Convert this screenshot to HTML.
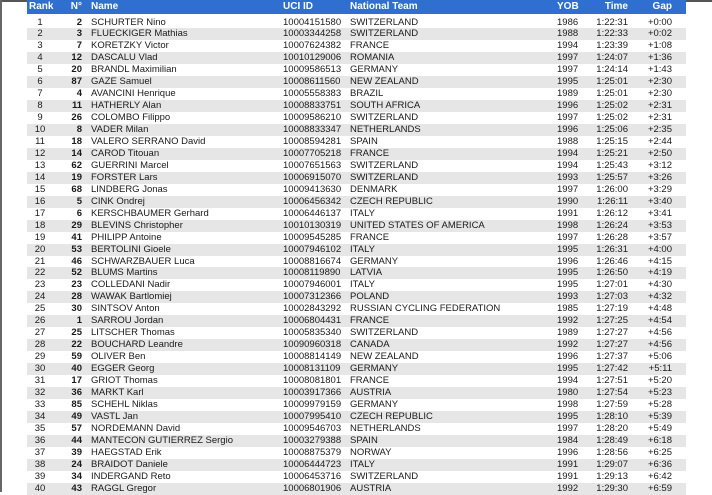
<!DOCTYPE html>
<html><head><meta charset="utf-8"><style>
body{margin:0;width:712px;height:492px;overflow:hidden;background:#fff;font-family:"Liberation Sans",Arial,sans-serif;font-size:9.5px;color:#1a1a1a;position:relative}
.topl{position:absolute;left:0;top:0;width:712px;height:2px;background:#555}
.leftl{position:absolute;left:0;top:0;width:2px;height:492px;background:#666}
.hdr{position:absolute;left:27px;top:0;width:659px;height:14px;background:#2f6fd0;color:#fff;font-weight:bold;font-size:10px}
.r{position:absolute;left:27px;width:659px;height:12px;line-height:12px}
.r:nth-child(even){background:#e6e6e6}
.r span,.hdr span{position:absolute;white-space:nowrap;top:0}
.hdr span{line-height:14px}
.a{left:0;width:26px;text-align:center}
.b{right:604px;font-weight:bold;text-align:right}
.c{left:64px}
.d{left:256px}
.e{left:323px}
.f{left:530px}
.g{right:58px}
.h{right:14px}
</style></head><body>
<div class="topl"></div><div class="leftl"></div>
<div class="hdr"><span style="left:2px">Rank</span><span class="b">N°</span><span class="c">Name</span><span class="d">UCI ID</span><span class="e">National Team</span><span class="f">YOB</span><span class="g">Time</span><span class="h">Gap</span></div>
<div id="t" style="position:absolute;left:0;top:16.5px">
<div class="r" style="top:0px"><span class="a">1</span><span class="b">2</span><span class="c">SCHURTER Nino</span><span class="d">10004151580</span><span class="e">SWITZERLAND</span><span class="f">1986</span><span class="g">1:22:31</span><span class="h">+0:00</span></div>
<div class="r" style="top:11.95px"><span class="a">2</span><span class="b">3</span><span class="c">FLUECKIGER Mathias</span><span class="d">10003344258</span><span class="e">SWITZERLAND</span><span class="f">1988</span><span class="g">1:22:33</span><span class="h">+0:02</span></div>
<div class="r" style="top:23.9px"><span class="a">3</span><span class="b">7</span><span class="c">KORETZKY Victor</span><span class="d">10007624382</span><span class="e">FRANCE</span><span class="f">1994</span><span class="g">1:23:39</span><span class="h">+1:08</span></div>
<div class="r" style="top:35.85px"><span class="a">4</span><span class="b">12</span><span class="c">DASCALU Vlad</span><span class="d">10010129006</span><span class="e">ROMANIA</span><span class="f">1997</span><span class="g">1:24:07</span><span class="h">+1:36</span></div>
<div class="r" style="top:47.8px"><span class="a">5</span><span class="b">20</span><span class="c">BRANDL Maximilian</span><span class="d">10009586513</span><span class="e">GERMANY</span><span class="f">1997</span><span class="g">1:24:14</span><span class="h">+1:43</span></div>
<div class="r" style="top:59.75px"><span class="a">6</span><span class="b">87</span><span class="c">GAZE Samuel</span><span class="d">10008611560</span><span class="e">NEW ZEALAND</span><span class="f">1995</span><span class="g">1:25:01</span><span class="h">+2:30</span></div>
<div class="r" style="top:71.7px"><span class="a">7</span><span class="b">4</span><span class="c">AVANCINI Henrique</span><span class="d">10005558383</span><span class="e">BRAZIL</span><span class="f">1989</span><span class="g">1:25:01</span><span class="h">+2:30</span></div>
<div class="r" style="top:83.65px"><span class="a">8</span><span class="b">11</span><span class="c">HATHERLY Alan</span><span class="d">10008833751</span><span class="e">SOUTH AFRICA</span><span class="f">1996</span><span class="g">1:25:02</span><span class="h">+2:31</span></div>
<div class="r" style="top:95.6px"><span class="a">9</span><span class="b">26</span><span class="c">COLOMBO Filippo</span><span class="d">10009586210</span><span class="e">SWITZERLAND</span><span class="f">1997</span><span class="g">1:25:02</span><span class="h">+2:31</span></div>
<div class="r" style="top:107.55px"><span class="a">10</span><span class="b">8</span><span class="c">VADER Milan</span><span class="d">10008833347</span><span class="e">NETHERLANDS</span><span class="f">1996</span><span class="g">1:25:06</span><span class="h">+2:35</span></div>
<div class="r" style="top:119.5px"><span class="a">11</span><span class="b">18</span><span class="c">VALERO SERRANO David</span><span class="d">10008594281</span><span class="e">SPAIN</span><span class="f">1988</span><span class="g">1:25:15</span><span class="h">+2:44</span></div>
<div class="r" style="top:131.45px"><span class="a">12</span><span class="b">14</span><span class="c">CAROD Titouan</span><span class="d">10007705218</span><span class="e">FRANCE</span><span class="f">1994</span><span class="g">1:25:21</span><span class="h">+2:50</span></div>
<div class="r" style="top:143.4px"><span class="a">13</span><span class="b">62</span><span class="c">GUERRINI Marcel</span><span class="d">10007651563</span><span class="e">SWITZERLAND</span><span class="f">1994</span><span class="g">1:25:43</span><span class="h">+3:12</span></div>
<div class="r" style="top:155.35px"><span class="a">14</span><span class="b">19</span><span class="c">FORSTER Lars</span><span class="d">10006915070</span><span class="e">SWITZERLAND</span><span class="f">1993</span><span class="g">1:25:57</span><span class="h">+3:26</span></div>
<div class="r" style="top:167.3px"><span class="a">15</span><span class="b">68</span><span class="c">LINDBERG Jonas</span><span class="d">10009413630</span><span class="e">DENMARK</span><span class="f">1997</span><span class="g">1:26:00</span><span class="h">+3:29</span></div>
<div class="r" style="top:179.25px"><span class="a">16</span><span class="b">5</span><span class="c">CINK Ondrej</span><span class="d">10006456342</span><span class="e">CZECH REPUBLIC</span><span class="f">1990</span><span class="g">1:26:11</span><span class="h">+3:40</span></div>
<div class="r" style="top:191.2px"><span class="a">17</span><span class="b">6</span><span class="c">KERSCHBAUMER Gerhard</span><span class="d">10006446137</span><span class="e">ITALY</span><span class="f">1991</span><span class="g">1:26:12</span><span class="h">+3:41</span></div>
<div class="r" style="top:203.15px"><span class="a">18</span><span class="b">29</span><span class="c">BLEVINS Christopher</span><span class="d">10010130319</span><span class="e">UNITED STATES OF AMERICA</span><span class="f">1998</span><span class="g">1:26:24</span><span class="h">+3:53</span></div>
<div class="r" style="top:215.1px"><span class="a">19</span><span class="b">41</span><span class="c">PHILIPP Antoine</span><span class="d">10009545285</span><span class="e">FRANCE</span><span class="f">1997</span><span class="g">1:26:28</span><span class="h">+3:57</span></div>
<div class="r" style="top:227.05px"><span class="a">20</span><span class="b">53</span><span class="c">BERTOLINI Gioele</span><span class="d">10007946102</span><span class="e">ITALY</span><span class="f">1995</span><span class="g">1:26:31</span><span class="h">+4:00</span></div>
<div class="r" style="top:239px"><span class="a">21</span><span class="b">46</span><span class="c">SCHWARZBAUER Luca</span><span class="d">10008816674</span><span class="e">GERMANY</span><span class="f">1996</span><span class="g">1:26:46</span><span class="h">+4:15</span></div>
<div class="r" style="top:250.95px"><span class="a">22</span><span class="b">52</span><span class="c">BLUMS Martins</span><span class="d">10008119890</span><span class="e">LATVIA</span><span class="f">1995</span><span class="g">1:26:50</span><span class="h">+4:19</span></div>
<div class="r" style="top:262.9px"><span class="a">23</span><span class="b">23</span><span class="c">COLLEDANI Nadir</span><span class="d">10007946001</span><span class="e">ITALY</span><span class="f">1995</span><span class="g">1:27:01</span><span class="h">+4:30</span></div>
<div class="r" style="top:274.85px"><span class="a">24</span><span class="b">28</span><span class="c">WAWAK Bartlomiej</span><span class="d">10007312366</span><span class="e">POLAND</span><span class="f">1993</span><span class="g">1:27:03</span><span class="h">+4:32</span></div>
<div class="r" style="top:286.8px"><span class="a">25</span><span class="b">30</span><span class="c">SINTSOV Anton</span><span class="d">10002843292</span><span class="e">RUSSIAN CYCLING FEDERATION</span><span class="f">1985</span><span class="g">1:27:19</span><span class="h">+4:48</span></div>
<div class="r" style="top:298.75px"><span class="a">26</span><span class="b">1</span><span class="c">SARROU Jordan</span><span class="d">10006804431</span><span class="e">FRANCE</span><span class="f">1992</span><span class="g">1:27:25</span><span class="h">+4:54</span></div>
<div class="r" style="top:310.7px"><span class="a">27</span><span class="b">25</span><span class="c">LITSCHER Thomas</span><span class="d">10005835340</span><span class="e">SWITZERLAND</span><span class="f">1989</span><span class="g">1:27:27</span><span class="h">+4:56</span></div>
<div class="r" style="top:322.65px"><span class="a">28</span><span class="b">22</span><span class="c">BOUCHARD Leandre</span><span class="d">10090960318</span><span class="e">CANADA</span><span class="f">1992</span><span class="g">1:27:27</span><span class="h">+4:56</span></div>
<div class="r" style="top:334.6px"><span class="a">29</span><span class="b">59</span><span class="c">OLIVER Ben</span><span class="d">10008814149</span><span class="e">NEW ZEALAND</span><span class="f">1996</span><span class="g">1:27:37</span><span class="h">+5:06</span></div>
<div class="r" style="top:346.55px"><span class="a">30</span><span class="b">40</span><span class="c">EGGER Georg</span><span class="d">10008131109</span><span class="e">GERMANY</span><span class="f">1995</span><span class="g">1:27:42</span><span class="h">+5:11</span></div>
<div class="r" style="top:358.5px"><span class="a">31</span><span class="b">17</span><span class="c">GRIOT Thomas</span><span class="d">10008081801</span><span class="e">FRANCE</span><span class="f">1994</span><span class="g">1:27:51</span><span class="h">+5:20</span></div>
<div class="r" style="top:370.45px"><span class="a">32</span><span class="b">36</span><span class="c">MARKT Karl</span><span class="d">10003917366</span><span class="e">AUSTRIA</span><span class="f">1980</span><span class="g">1:27:54</span><span class="h">+5:23</span></div>
<div class="r" style="top:382.4px"><span class="a">33</span><span class="b">85</span><span class="c">SCHEHL Niklas</span><span class="d">10009979159</span><span class="e">GERMANY</span><span class="f">1998</span><span class="g">1:27:59</span><span class="h">+5:28</span></div>
<div class="r" style="top:394.35px"><span class="a">34</span><span class="b">49</span><span class="c">VASTL Jan</span><span class="d">10007995410</span><span class="e">CZECH REPUBLIC</span><span class="f">1995</span><span class="g">1:28:10</span><span class="h">+5:39</span></div>
<div class="r" style="top:406.3px"><span class="a">35</span><span class="b">57</span><span class="c">NORDEMANN David</span><span class="d">10009546703</span><span class="e">NETHERLANDS</span><span class="f">1997</span><span class="g">1:28:20</span><span class="h">+5:49</span></div>
<div class="r" style="top:418.25px"><span class="a">36</span><span class="b">44</span><span class="c">MANTECON GUTIERREZ Sergio</span><span class="d">10003279388</span><span class="e">SPAIN</span><span class="f">1984</span><span class="g">1:28:49</span><span class="h">+6:18</span></div>
<div class="r" style="top:430.2px"><span class="a">37</span><span class="b">39</span><span class="c">HAEGSTAD Erik</span><span class="d">10008875379</span><span class="e">NORWAY</span><span class="f">1996</span><span class="g">1:28:56</span><span class="h">+6:25</span></div>
<div class="r" style="top:442.15px"><span class="a">38</span><span class="b">24</span><span class="c">BRAIDOT Daniele</span><span class="d">10006444723</span><span class="e">ITALY</span><span class="f">1991</span><span class="g">1:29:07</span><span class="h">+6:36</span></div>
<div class="r" style="top:454.1px"><span class="a">39</span><span class="b">34</span><span class="c">INDERGAND Reto</span><span class="d">10006453716</span><span class="e">SWITZERLAND</span><span class="f">1991</span><span class="g">1:29:13</span><span class="h">+6:42</span></div>
<div class="r" style="top:466.05px"><span class="a">40</span><span class="b">43</span><span class="c">RAGGL Gregor</span><span class="d">10006801906</span><span class="e">AUSTRIA</span><span class="f">1992</span><span class="g">1:29:30</span><span class="h">+6:59</span></div>
</div>
</body></html>
